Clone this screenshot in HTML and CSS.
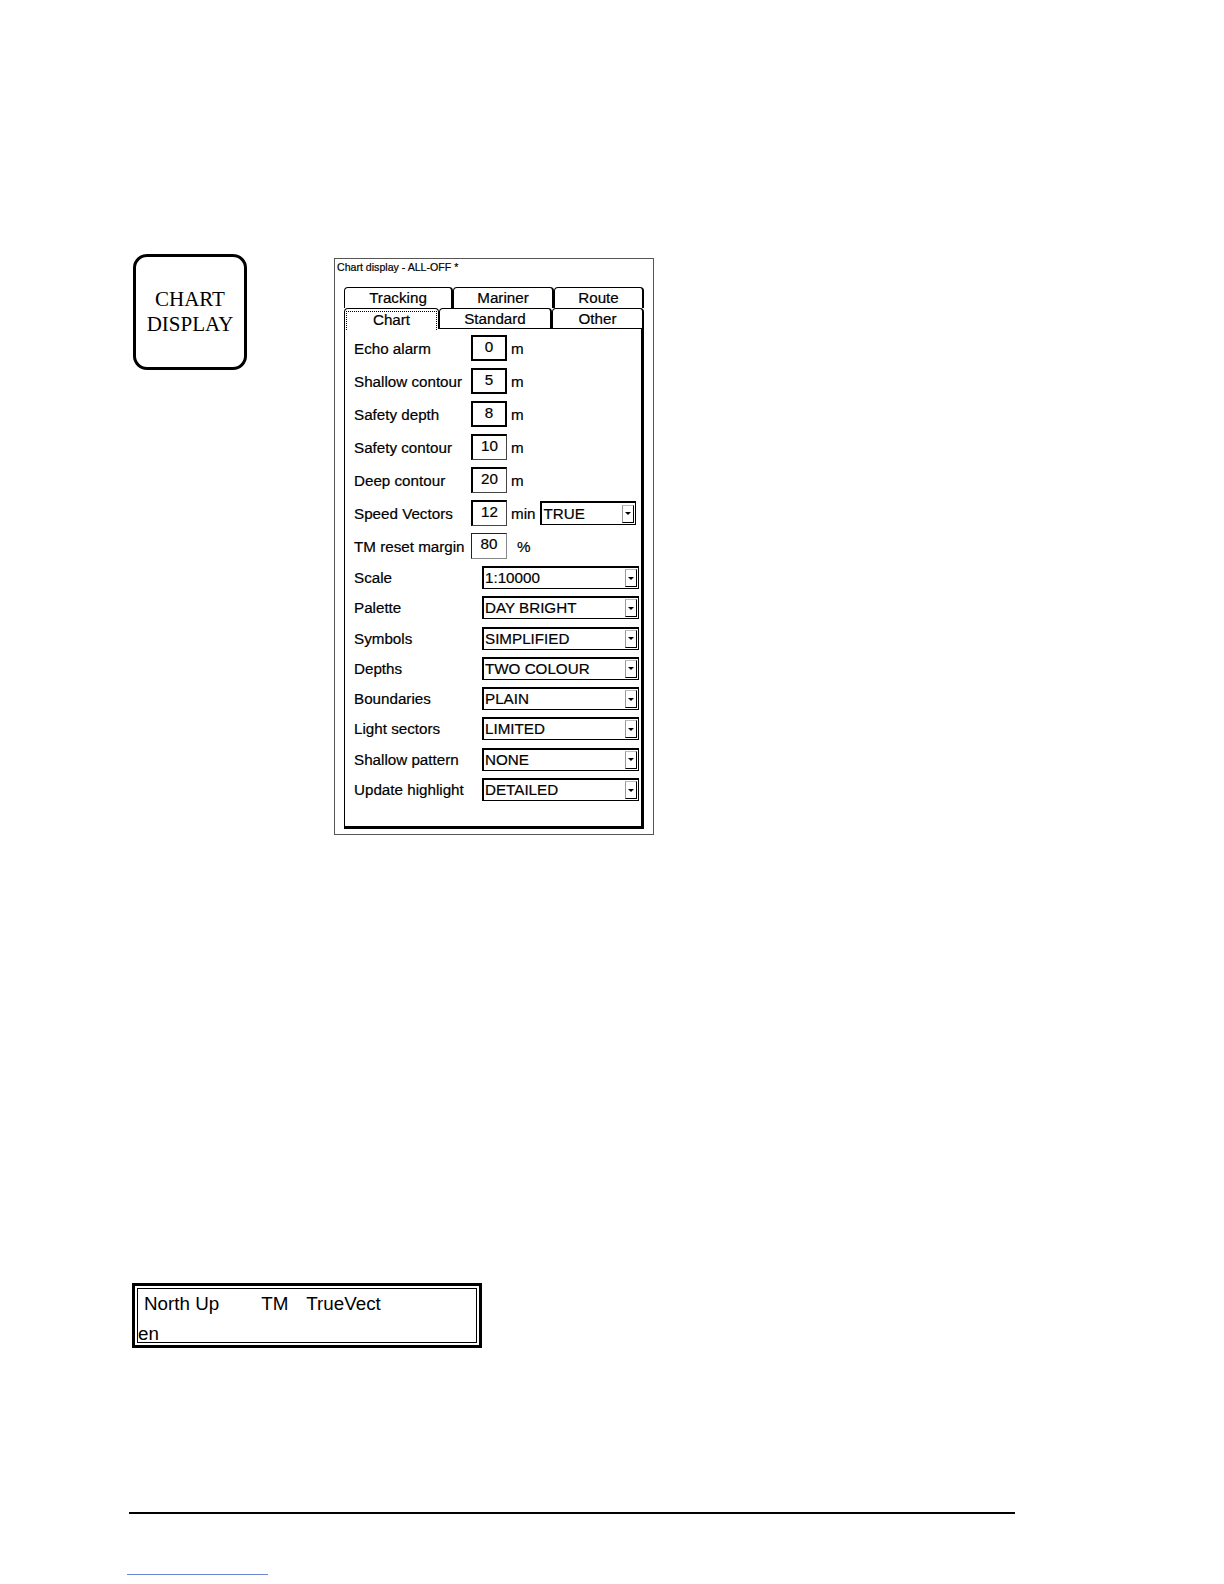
FILE: index.html
```html
<!DOCTYPE html>
<html>
<head>
<meta charset="utf-8">
<link rel="stylesheet" href="styles.css">
</head>
<body>
<div class="top">
  <div class="key"><span>CHART</span><span>DISPLAY</span></div>
  <div class="dialog">
    <div class="title">Chart display - ALL-OFF *</div>
    <div class="tabs">
      <div class="tabrow">
        <div class="tab w-tracking">Tracking</div>
        <div class="tab w-mariner">Mariner</div>
        <div class="tab w-route">Route</div>
      </div>
      <div class="tabrow">
        <div class="tab w-chart active"><span class="focus">Chart</span></div>
        <div class="tab w-standard lower">Standard</div>
        <div class="tab w-other lower">Other</div>
      </div>
    </div>
    <div class="panel">
      <div class="row"><span class="lbl">Echo alarm</span><span class="box strong">0</span><span class="unit">m</span></div>
      <div class="row"><span class="lbl">Shallow contour</span><span class="box strong">5</span><span class="unit">m</span></div>
      <div class="row"><span class="lbl">Safety depth</span><span class="box strong">8</span><span class="unit">m</span></div>
      <div class="row"><span class="lbl">Safety contour</span><span class="box">10</span><span class="unit">m</span></div>
      <div class="row"><span class="lbl">Deep contour</span><span class="box">20</span><span class="unit">m</span></div>
      <div class="row"><span class="lbl">Speed Vectors</span><span class="box">12</span><span class="unit">min</span>
        <span class="select small"><span class="val">TRUE</span><span class="arrow"><i></i></span></span></div>
      <div class="row"><span class="lbl">TM reset margin</span><span class="box light">80</span><span class="unit pct">%</span></div>

      <div class="drops">
        <div class="drow"><span class="dlbl">Scale</span><span class="select"><span class="val">1:10000</span><span class="arrow"><i></i></span></span></div>
        <div class="drow"><span class="dlbl">Palette</span><span class="select"><span class="val">DAY BRIGHT</span><span class="arrow"><i></i></span></span></div>
        <div class="drow"><span class="dlbl">Symbols</span><span class="select"><span class="val">SIMPLIFIED</span><span class="arrow"><i></i></span></span></div>
        <div class="drow"><span class="dlbl">Depths</span><span class="select"><span class="val">TWO COLOUR</span><span class="arrow"><i></i></span></span></div>
        <div class="drow"><span class="dlbl">Boundaries</span><span class="select"><span class="val">PLAIN</span><span class="arrow"><i></i></span></span></div>
        <div class="drow"><span class="dlbl">Light sectors</span><span class="select"><span class="val">LIMITED</span><span class="arrow"><i></i></span></span></div>
        <div class="drow"><span class="dlbl">Shallow pattern</span><span class="select"><span class="val">NONE</span><span class="arrow"><i></i></span></span></div>
        <div class="drow"><span class="dlbl">Update highlight</span><span class="select"><span class="val">DETAILED</span><span class="arrow"><i></i></span></span></div>
      </div>
    </div>
  </div>
</div>

<div class="status">
  <div class="status-inner">
    <div class="l1"><span class="s1">North Up</span><span class="s2">TM</span><span class="s3">TrueVect</span></div>
    <div class="l2">en</div>
  </div>
</div>

<div class="rule"></div>
<div class="link"></div>
</body>
</html>
```

FILE: styles.css
```css
html, body { margin: 0; padding: 0; background: #fff; }
body { width: 1224px; height: 1584px; overflow: hidden; font-family: "Liberation Sans", Arial, sans-serif; color: #000; }

.top { display: flex; align-items: flex-start; margin-top: 254px; }

.key {
  margin-left: 133px;
  width: 108px; height: 110px;
  border: 3px solid #000; border-radius: 14px;
  display: flex; flex-direction: column; align-items: center; justify-content: center;
  font-family: "Liberation Serif", "Times New Roman", serif; font-size: 21px; line-height: 25px;
}

.dialog {
  margin-left: 87px; margin-top: 4px;
  width: 318px; height: 575px;
  border: 1px solid #555;
  box-sizing: content-box;
  -webkit-text-stroke: 0.2px #000;
}
.title { font-size: 10.6px; line-height: 12px; padding: 2px 0 0 2px; height: 12px; }

.tabs { margin-left: 9px; margin-top: 14px; }
.tabrow { display: flex; height: 21px; }
.tab {
  box-sizing: border-box; height: 21px;
  border-top: 1px solid #000; border-left: 1px solid #000; border-right: 2px solid #000;
  border-radius: 4px 4px 0 0;
  font-size: 15.2px; line-height: 19px; text-align: center; padding-top: 0;
}
.tab.lower { border-bottom: 1px solid #000; }
.w-tracking { width: 109px; } .w-mariner { width: 101px; } .w-route { width: 90px; }
.w-chart { width: 95px; } .w-standard { width: 113px; } .w-other { width: 92px; }
.tab.active { padding: 2px 1px 0 1px; line-height: 16px; border-right: 1px solid #000; }
.focus { display: block; border: 1px dotted #000; border-bottom: none; height: 18px; }

.panel {
  margin-left: 9px;
  width: 300px; height: 500px; box-sizing: border-box;
  border-left: 1px solid #000; border-right: 3px solid #000; border-bottom: 3px solid #000;
  padding: 6px 0 0 9px;
}

.row { display: flex; align-items: center; height: 26px; margin-bottom: 7px; font-size: 15.2px; }
.lbl { width: 117px; white-space: nowrap; }
.box {
  box-sizing: border-box; width: 36px; height: 26px;
  border-top: 2px solid #000; border-left: 2px solid #000; border-right: 1px solid #444; border-bottom: 1px solid #444;
  text-align: center; line-height: 20px; font-size: 15.2px;
}
.box.strong { border: 2px solid #000; }
.box.light { border-top: 1px solid #222; border-left: 1px solid #222; border-right: 1px solid #888; border-bottom: 1px solid #888; }
.unit { margin-left: 4px; }
.unit.pct { margin-left: 10px; }

.select {
  box-sizing: border-box; height: 23px; width: 157px;
  border-top: 2px solid #000; border-left: 2px solid #000; border-right: 1px solid #000; border-bottom: 1px solid #000;
  display: flex; align-items: center; justify-content: space-between;
  font-size: 15.2px;
}
.select.small { width: 96px; height: 24px; margin-left: 5px; }
.val { padding-left: 1px; line-height: 18px; }
.arrow {
  box-sizing: border-box; width: 12px; height: 18px; margin-right: 1px;
  border: 1px solid #000; border-top-color: #bbb; border-left-color: #999;
  display: flex; align-items: center; justify-content: center;
  -webkit-text-stroke: 0;
}
.arrow i { display: block; width: 0; height: 0; border-left: 3px solid transparent; border-right: 3px solid transparent; border-top: 3px solid #000; }

.drops { margin-top: 4px; }
.drow { display: flex; align-items: center; height: 23px; margin-bottom: 7.3px; font-size: 15.2px; }
.dlbl { width: 128px; white-space: nowrap; }

.status {
  margin-left: 132px; margin-top: 448px;
  width: 340px; height: 55px;
  border: 3px solid #000; padding: 2px;
  box-sizing: content-box;
}
.status-inner { border: 1px solid #000; height: 53px; font-size: 18.8px; }
.l1 { line-height: 30px; padding-left: 6px; margin-top: 0; white-space: nowrap; }
.s2 { margin-left: 42px; }
.s3 { margin-left: 18px; }
.l2 { line-height: 30px; padding-left: 0; }

.rule { margin-left: 129px; margin-top: 164px; width: 886px; height: 2px; background: #000; }
.link { margin-left: 127px; margin-top: 60px; width: 141px; height: 1px; background: #6f86d6; }
```
